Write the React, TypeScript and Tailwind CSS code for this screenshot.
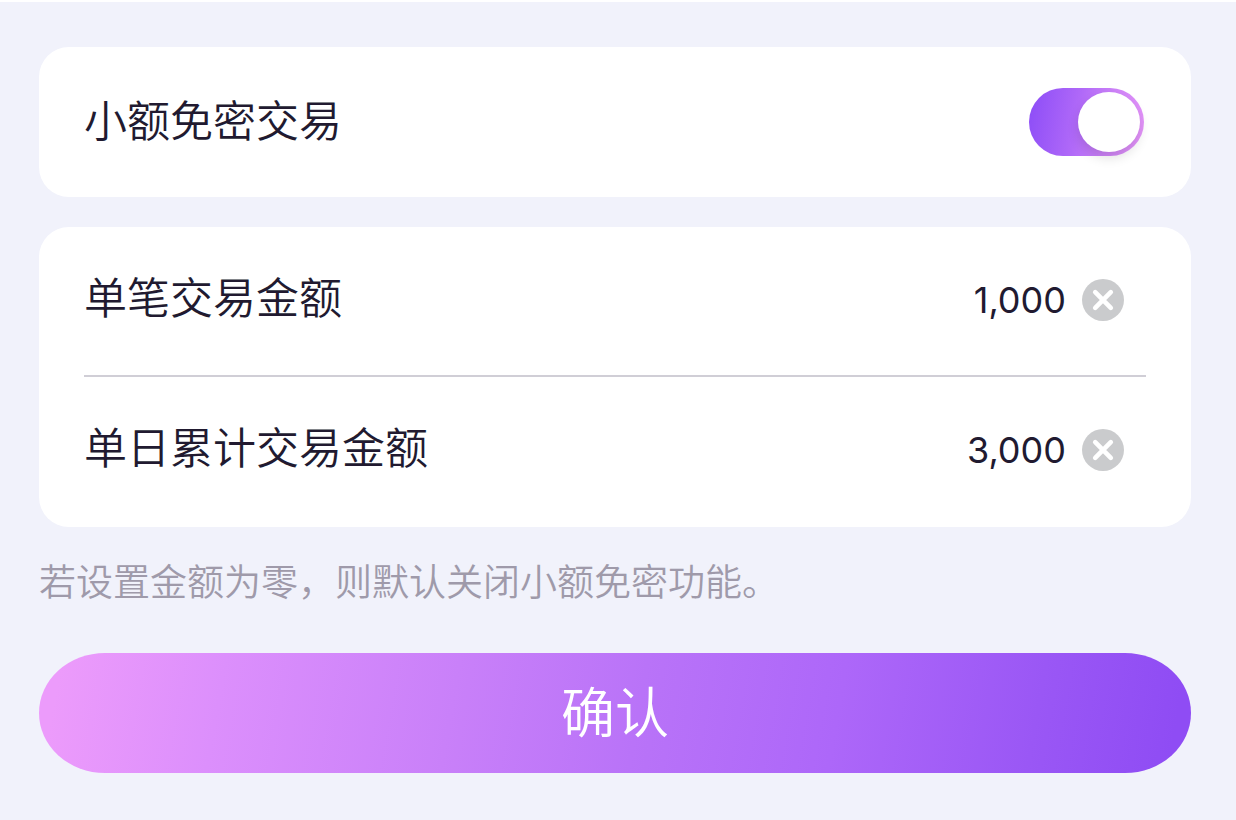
import React, { useState } from 'react'

type AmountRowProps = {
  id: string
  label: string
  value: string
  onChange: (value: string) => void
}

const AmountRow = ({ id, label, value, onChange }: AmountRowProps) => (
  <div className="flex h-[148px] items-center pb-0.5">
    <label htmlFor={id} className="shrink-0 pb-2.5 text-[43px] leading-[60px] font-[350]">
      {label}
    </label>
    <input
      id={id}
      type="text"
      inputMode="numeric"
      value={value}
      onChange={(e) => onChange(e.target.value)}
      className="min-w-0 flex-1 bg-transparent text-right font-['Inter','Noto_Sans_CJK_SC',sans-serif] text-[36px] leading-[48px] outline-none"
    />
    <button
      type="button"
      aria-label={`清除${label}`}
      onClick={() => onChange('')}
      className="mr-[22px] ml-4 shrink-0 rounded-full"
    >
      <svg viewBox="0 0 42 42" className="h-[42px] w-[42px]" aria-hidden="true">
        <circle cx="21" cy="21" r="21" fill="#cacbcd" />
        <path d="M13.2 13.2 L28.8 28.8 M28.8 13.2 L13.2 28.8" stroke="#fff" strokeWidth="4.6" strokeLinecap="round" />
      </svg>
    </button>
  </div>
)

const App = () => {
  const [enabled, setEnabled] = useState(true)
  const [single, setSingle] = useState('1,000')
  const [daily, setDaily] = useState('3,000')

  return (
    <main className="min-h-screen border-t-2 border-white bg-[#f1f2fb] pt-[45px] pr-[45px] pb-12 pl-[39px] font-['Noto_Sans_CJK_SC',sans-serif] text-[#211a30]">
      <form onSubmit={(e) => e.preventDefault()}>
        {/* Switch card */}
        <section className="flex h-[150px] items-center justify-between rounded-[30px] bg-white pr-[47px] pl-[45px]">
          <label htmlFor="password-free" className="pb-2 text-[43px] leading-[60px] font-[350]">
            小额免密交易
          </label>
          <input
            id="password-free"
            type="checkbox"
            role="switch"
            checked={enabled}
            onChange={(e) => setEnabled(e.target.checked)}
            className="flex h-[68px] w-[115px] shrink-0 cursor-pointer appearance-none items-center rounded-full bg-gray-300 px-1 before:h-[60px] before:w-[62px] before:rounded-[50%] before:bg-white before:shadow-[0_6px_12px_rgba(0,0,0,0.12)] before:content-[''] checked:justify-end checked:bg-[linear-gradient(100deg,#8f4ff7_4%,#b069f8_42%,#cf84f8_70%,#e695fa_98%)]"
          />
        </section>

        {/* Limits */}
        <section className="mt-[30px] rounded-[30px] bg-white px-[45px] pb-0.5">
          <AmountRow id="single-limit" label="单笔交易金额" value={single} onChange={setSingle} />
          <hr className="border-t-2 border-[#d0ced6]" />
          <AmountRow id="daily-limit" label="单日累计交易金额" value={daily} onChange={setDaily} />
        </section>

        <p className="mt-7 text-[37px] leading-[50px] font-[350] text-[#9f9aaa]">
          若设置金额为零，则默认关闭小额免密功能。
        </p>

        <button
          type="submit"
          className="mt-12 flex h-[120px] w-full items-center justify-center rounded-[66px/60px] bg-[linear-gradient(100deg,#ec9bfb_2%,#dc8ffc_16%,#c980f9_36%,#b973f8_52%,#ad67f9_69%,#9a57f5_86%,#8f4cf4_98%)] pb-1.5 text-[54px] leading-[72px] font-[350] text-white"
        >
          确认
        </button>
      </form>
    </main>
  )
}

export default App
